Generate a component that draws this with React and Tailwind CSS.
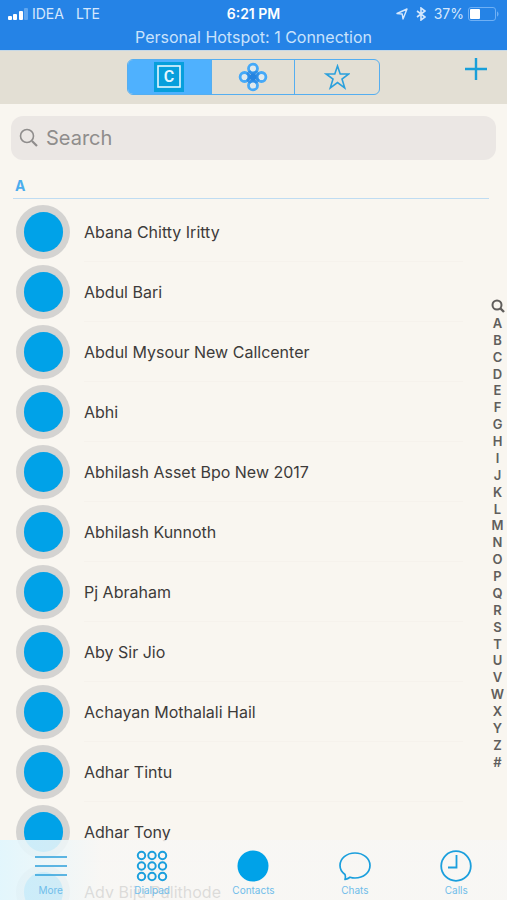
import { useState } from 'react';

const contacts = [
  'Abana Chitty Iritty',
  'Abdul Bari',
  'Abdul Mysour New Callcenter',
  'Abhi',
  'Abhilash Asset Bpo New 2017',
  'Abhilash Kunnoth',
  'Pj Abraham',
  'Aby Sir Jio',
  'Achayan Mothalali Hail',
  'Adhar Tintu',
  'Adhar Tony',
  'Adv Biju Palithode',
];

const letters = 'ABCDEFGHIJKLMNOPQRSTUVWXYZ#'.split('');

function StatusBar() {
  return (
    <div className="h-[50px] shrink-0 bg-[#2583e6] text-white">
      <div className="grid grid-cols-3 items-center h-7 px-2">
        <div className="flex items-center text-sm text-[#d5e8fd]">
          <svg width="20" height="12" viewBox="0 0 20 12" className="mr-1">
            <rect x="0" y="8" width="4" height="4" rx="1" fill="#fff" />
            <rect x="5" y="6" width="4" height="6" rx="1" fill="#fff" />
            <rect x="11" y="3" width="4" height="9" rx="1" fill="#fff" />
            <rect x="16" y="0" width="4" height="12" rx="1" fill="#5ea6f0" />
          </svg>
          <span>IDEA</span>
          <span className="ml-3">LTE</span>
        </div>
        <div className="text-center text-sm font-semibold">6:21 PM</div>
        <div className="flex items-center justify-end text-sm text-[#d5e8fd]">
          <svg width="12" height="12" viewBox="0 0 12 12" fill="none" stroke="currentColor" strokeWidth="1.4" strokeLinejoin="round" className="mr-2">
            <path d="M1 5.500 11 1 7 11 6.200 6Z" />
          </svg>
          <svg width="10" height="14" viewBox="0 0 10 14" fill="none" stroke="currentColor" strokeWidth="1.6" className="mr-2">
            <path d="M1 4 9 10 5 13V1L9 4 1 10" />
          </svg>
          <span className="mr-1">37%</span>
          <svg width="31" height="14" viewBox="0 0 31 14">
            <rect x="0.5" y="0.5" width="27" height="13" rx="2.5" fill="none" stroke="#6fb0f5" />
            <rect x="2" y="2" width="10" height="10" rx="1" fill="#fff" />
            <path d="M29 4.500c2 .5 2 4.500 0 5Z" fill="#6fb0f5" />
          </svg>
        </div>
      </div>
      <div className="text-center text-base leading-[18px] text-[#c9e2fc]">Personal Hotspot: 1 Connection</div>
    </div>
  );
}

function SquareCIcon() {
  return (
    <svg width="30" height="30" viewBox="0 0 30 30">
      <rect width="30" height="30" fill="#079fdc" />
      <rect x="4" y="4" width="22" height="21" fill="none" stroke="#e5f7ff" strokeWidth="1.6" />
      <text x="15" y="20" textAnchor="middle" fontSize="16" fontWeight="600" fill="#e5f7ff" fontFamily="Roboto, sans-serif">C</text>
    </svg>
  );
}

function CloverIcon() {
  return (
    <svg width="30" height="30" viewBox="0 0 30 30" fill="none">
      <g stroke="#45a9f8" strokeWidth="2.800" fill="#dfe9ee">
        <circle cx="15" cy="6.600" r="4.500" />
        <circle cx="23.400" cy="15" r="4.500" />
        <circle cx="15" cy="23.400" r="4.500" />
        <circle cx="6.600" cy="15" r="4.500" />
      </g>
      <g stroke="#2f8fe8" strokeWidth="2.800">
        <path d="M11.100 8.850a4.500 4.500 0 0 0 7.800 0M21.150 11.100a4.500 4.500 0 0 0 0 7.800M11.100 21.150a4.500 4.500 0 0 1 7.800 0M8.850 11.100a4.500 4.500 0 0 1 0 7.800" />
      </g>
      <circle cx="15" cy="15" r="3.500" fill="#2583e0" />
    </svg>
  );
}

function StarIcon() {
  return (
    <svg width="26" height="26" viewBox="0 0 26 26" fill="none" stroke="#2ba0dc" strokeWidth="1.6">
      <path d="M13.500 2 16.200 10H24.800L18 15 20.700 23.800 13.500 18.500 6.300 23.800 9 15 2.200 10H10.800Z" />
    </svg>
  );
}

const views = [
  { id: 'contacts', label: 'Address book', Icon: SquareCIcon },
  { id: 'groups', label: 'Groups', Icon: CloverIcon },
  { id: 'favorites', label: 'Favorites', Icon: StarIcon },
];

function NavBar({ view, onChange }) {
  return (
    <header className="grid grid-cols-[1fr_2fr_1fr] h-[54px] shrink-0 bg-[#e3dfd4] border-t border-[#c6d8e6]">
      <div className="col-start-2 mt-2 grid grid-cols-3 h-9 rounded-md border border-[#55aef0] overflow-hidden divide-x divide-[#55aef0]">
        {views.map(({ id, label, Icon }) => (
          <button
            key={id}
            aria-label={label}
            aria-pressed={view === id}
            onClick={() => onChange(id)}
            className={`flex items-center justify-center ${view === id ? 'bg-[#4fb1fe]' : ''}`}
          >
            <Icon />
          </button>
        ))}
      </div>
      <button aria-label="Add contact" className="justify-self-end self-start mt-[2px] mr-[15px] p-1">
        <svg width="24" height="24" viewBox="0 0 24 24" stroke="#189fd9" strokeWidth="2.4">
          <path d="M12 1v22M1 12h22" />
        </svg>
      </button>
    </header>
  );
}

function MoreIcon() {
  return (
    <svg width="32" height="32" viewBox="0 0 32 32" stroke="#2ba0dc" strokeWidth="1.6">
      <path d="M0 7h32M0 16h32M0 25h32" />
    </svg>
  );
}

function DialpadIcon() {
  return (
    <svg width="32" height="32" viewBox="0 0 32 32" fill="none" stroke="#1b9fdd" strokeWidth="2">
      {[5.5, 16, 26.5].map(y => [5.5, 16, 26.5].map(x => <circle key={`${x}-${y}`} cx={x} cy={y} r="3.700" />))}
    </svg>
  );
}

function ContactsIcon() {
  return (
    <svg width="32" height="32" viewBox="0 0 32 32">
      <circle cx="16" cy="16" r="15.500" fill="#00a2e8" />
    </svg>
  );
}

function ChatsIcon() {
  return (
    <svg width="32" height="32" viewBox="0 0 32 32" fill="none" stroke="#1b9fdd" strokeWidth="1.7" strokeLinejoin="round">
      <path d="M6 24.500C2.500 22 1 19 1 15.500 1 8.500 7.500 3 16 3s15 5.500 15 12.500S24.500 28 16 28c-1.800 0-3.500-.3-5-.8C9.500 28.300 8 29 6 29.500c.7-1.500.7-3 0-5Z" />
    </svg>
  );
}

function CallsIcon() {
  return (
    <svg width="32" height="32" viewBox="0 0 32 32" fill="none" stroke="#1b9fdd" strokeWidth="1.8">
      <circle cx="16" cy="16" r="14.800" />
      <path d="M16.500 5v12.500H8" />
    </svg>
  );
}

const tabs = [
  { label: 'More', Icon: MoreIcon },
  { label: 'Dialpad', Icon: DialpadIcon },
  { label: 'Contacts', Icon: ContactsIcon },
  { label: 'Chats', Icon: ChatsIcon },
  { label: 'Calls', Icon: CallsIcon },
];

function TabBar() {
  return (
    <nav className="absolute inset-x-0 bottom-0 grid grid-cols-5 h-[60px] bg-linear-to-r from-[#e0f6fe]/90 via-[#f8f7f5]/85 via-20% to-[#f8f7f5]/85">
      {tabs.map(({ label, Icon }) => (
        <a key={label} href={`#${label.toLowerCase()}`} className="flex flex-col items-center pt-[10px] text-[10px] leading-4 text-[#70bdea]">
          <Icon />
          {label}
        </a>
      ))}
    </nav>
  );
}

export default function App() {
  const [view, setView] = useState('contacts');
  const [query, setQuery] = useState('');

  const visible = contacts.filter(name => name.toLowerCase().includes(query.toLowerCase()));

  return (
    <div className="relative flex flex-col h-screen overflow-hidden bg-[#f9f6f0] font-[Inter,sans-serif]">
      <StatusBar />
      <NavBar view={view} onChange={setView} />

      <label className="flex items-center gap-[7px] h-11 shrink-0 mx-[11px] mt-3 px-2 rounded-xl bg-[#ebe7e4]">
        <svg width="20" height="20" viewBox="0 0 20 20" fill="none" stroke="#8f8d8c" strokeWidth="1.6">
          <circle cx="8" cy="8" r="6.500" />
          <path d="m13 13 5 5" strokeWidth="2.200" />
        </svg>
        <input
          type="text"
          aria-label="Search"
          placeholder="Search"
          value={query}
          onChange={e => setQuery(e.target.value)}
          className="flex-1 bg-transparent outline-none text-xl text-[#3c3a3a] placeholder:text-[#8f8d8c]"
        />
      </label>

      <main className="flex-1 min-h-0 overflow-hidden pt-4">
        <h2 className="ml-[13px] mr-[18px] h-[23px] pl-[2px] border-b border-[#bfdcf2] text-sm leading-5 font-bold text-[#4cadee]">A</h2>
        <ul className="pt-[3px]">
          {visible.map(name => (
            <li key={name} className="flex items-center h-[60px] pl-4">
              <span className="size-[54px] shrink-0 rounded-full bg-[#d4d3d1] flex items-center justify-center">
                <span className="w-[39px] h-10 rounded-full bg-[#00a2e8]" />
              </span>
              <span className="flex-1 flex items-center h-full ml-[14px] mr-11 border-b border-[#f6f2ec] text-base text-[#3d3b3a]">{name}</span>
            </li>
          ))}
        </ul>
      </main>

      <div className="absolute right-0 top-[298px] h-[472px] w-[19px] flex flex-col items-center justify-between text-[13px] leading-4 font-semibold text-[#605e5c]">
        <svg width="14" height="16" viewBox="0 0 14 16" fill="none" stroke="currentColor" strokeWidth="2">
          <circle cx="6" cy="7" r="4.500" />
          <path d="m9 10 4 4" strokeWidth="2.400" />
        </svg>
        {letters.map(letter => (
          <a key={letter} href={`#section-${letter}`}>{letter}</a>
        ))}
      </div>

      <TabBar />
    </div>
  );
}
